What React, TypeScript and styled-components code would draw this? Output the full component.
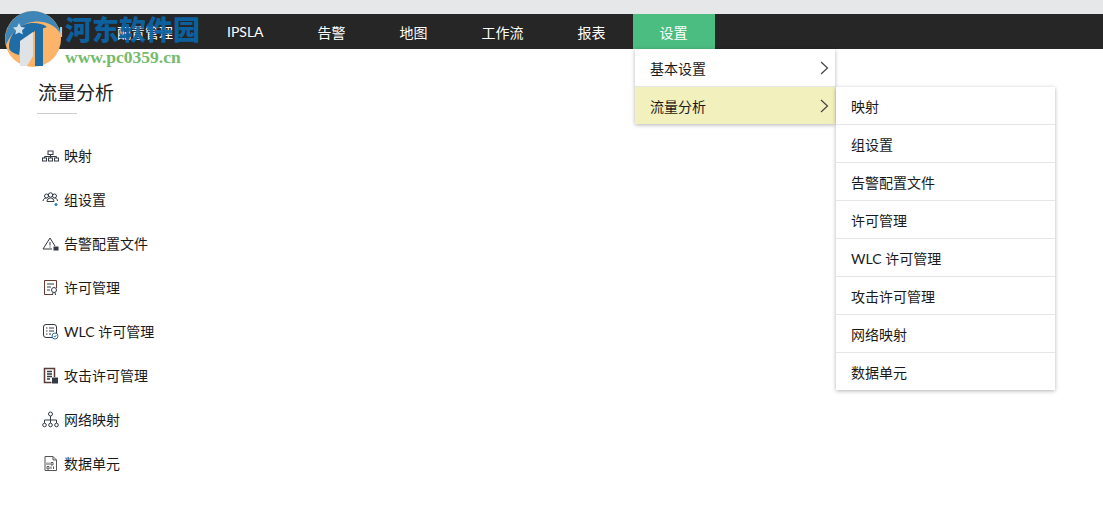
import React from 'react';
import styled, { createGlobalStyle } from 'styled-components';

const GlobalStyle = createGlobalStyle`
  html, body {
    margin: 0;
    padding: 0;
    background: #ffffff;
    font-family: Lato, "Noto Sans CJK SC", sans-serif;
    color: #1a1a1a;
    overflow: hidden;
  }
`;

const Page = styled.div`
  position: relative;
  width: 1103px;
  height: 526px;
`;

const TopStrip = styled.div`
  height: 14px;
  background: #e6e7e9;
`;

const NavBar = styled.nav`
  position: relative;
  display: flex;
  height: 35px;
  padding-left: 13px;
  background: #262626;
`;

const NavItem = styled.div<{ $active?: boolean }>`
  display: flex;
  align-items: center;
  padding: 0 27px;
  font-size: 14px;
  color: #ffffff;
  background: ${props => (props.$active ? '#4cbd80' : 'transparent')};
`;

const Content = styled.main`
  padding: 31px 0 0 38px;
`;

const Title = styled.h1`
  margin: 0;
  padding-bottom: 7px;
  font-size: 19px;
  line-height: 26px;
  font-weight: 400;
  color: #222222;
`;

const TitleRule = styled.div`
  width: 40px;
  height: 1px;
  margin-left: -1px;
  background: #cccccc;
`;

const FeatureList = styled.ul`
  list-style: none;
  margin: 19px 0 0;
  padding: 0 0 0 4px;
`;

const FeatureRow = styled.li`
  display: flex;
  align-items: center;
  gap: 5px;
  height: 44px;
  font-size: 14px;
  color: #1a1a1a;
`;

const IconBox = styled.svg`
  width: 17px;
  height: 17px;
  flex: none;
  fill: none;
  stroke: #333a44;
  stroke-width: 1;
`;

const Dropdown = styled.div`
  position: absolute;
  top: 49px;
  left: 635px;
  width: 200px;
  background: #ffffff;
  box-shadow: 0 1px 4px rgba(0, 0, 0, 0.3);
`;

const DropdownItem = styled.div<{ $active?: boolean }>`
  display: flex;
  align-items: center;
  justify-content: space-between;
  height: 37px;
  padding: 0 6px 0 15px;
  font-size: 14px;
  color: #1a1a1a;
  background: ${props => (props.$active ? '#f2f0bd' : '#ffffff')};
  & + & {
    border-top: 1px solid #e6e6e6;
  }
`;

const Chevron = styled.svg`
  width: 9px;
  height: 14px;
  fill: none;
  stroke: #444444;
  stroke-width: 1.2;
`;

const SubMenu = styled.div`
  position: absolute;
  top: 87px;
  left: 836px;
  width: 219px;
  background: #ffffff;
  box-shadow: 0 1px 4px rgba(0, 0, 0, 0.3);
`;

const SubMenuItem = styled.div`
  display: flex;
  align-items: center;
  height: 37px;
  padding-left: 15px;
  font-size: 14px;
  color: #1a1a1a;
  & + & {
    border-top: 1px solid #e6e6e6;
  }
`;

const Watermark = styled.div`
  position: absolute;
  top: 11px;
  left: 5px;
  display: flex;
  gap: 4px;
  pointer-events: none;
`;

const WatermarkText = styled.div`
  display: flex;
  flex-direction: column;
  align-items: flex-start;
`;

const WatermarkTitle = styled.div`
  height: 35px;
  font-family: "Noto Sans CJK SC", sans-serif;
  font-size: 27px;
  line-height: 36px;
  font-weight: 900;
  color: rgba(10, 100, 165, 0.95);
`;

const WatermarkUrl = styled.div`
  margin-top: 1px;
  font-family: "Liberation Serif", serif;
  font-size: 17.5px;
  line-height: 20px;
  font-weight: 700;
  color: #74bb6c;
`;

const features: { label: string; icon: React.ReactNode }[] = [
  {
    label: '映射',
    icon: (
      <>
        <rect x="6" y="4" width="5" height="3.5" />
        <rect x="0.5" y="11" width="4" height="3" />
        <rect x="6.5" y="11" width="4" height="3" />
        <rect x="12.5" y="11" width="4" height="3" />
        <path d="M2.5 11V9.5h12V11M8.5 7.5V11" />
      </>
    ),
  },
  {
    label: '组设置',
    icon: (
      <>
        <circle cx="4.5" cy="5" r="2" />
        <circle cx="8.5" cy="4" r="2.2" />
        <circle cx="12.5" cy="5" r="2" />
        <path d="M1 10c0-2 2-3 3.5-3M5 10.5c0-2 1.5-3.5 3.5-3.5s3.5 1.500 3.500 3.500H5zM12.500 7c1.500 0 3 1 3 3" />
        <circle cx="14" cy="13.500" r="1.500" fill="#2f7fc1" stroke="none" />
      </>
    ),
  },
  {
    label: '告警配置文件',
    icon: (
      <>
        <path d="M8 3 1 14h9M8 3l5 8" />
        <path d="M8 7v3.500M8 11.500v1" />
        <rect x="12" y="12" width="4" height="3" fill="#333a44" />
      </>
    ),
  },
  {
    label: '许可管理',
    icon: (
      <>
        <path d="M14.500 9V1.500h-12v14h8" stroke="#6b3a2e" />
        <path d="M5 5h7M5 8h4M5 11h3" />
        <circle cx="12" cy="11" r="2.500" />
        <path d="M11 13.500 10.500 16M13 13.500l.5 2.500" />
      </>
    ),
  },
  {
    label: 'WLC 许可管理',
    icon: (
      <>
        <rect x="1.500" y="1.500" width="13" height="13" rx="2.500" />
        <path d="M4 5h1.500M7 5h5M4 8h1.500M7 8h5M4 11h1.500M7 11h2" />
        <circle cx="13" cy="13" r="3" fill="#ffffff" stroke="#2f6fa8" />
        <path d="m11.800 13 1 1 1.500-1.800" stroke="#2f6fa8" />
      </>
    ),
  },
  {
    label: '攻击许可管理',
    icon: (
      <>
        <path d="M12.500 10V1.500h-10v14h7" strokeWidth="1.500" stroke="#5a3a34" />
        <path d="M5 4.500h5M5 7h5M5 9.500h5M5 12h3" strokeWidth="1.300" />
        <rect x="10.500" y="11" width="5" height="5" fill="#333a44" />
      </>
    ),
  },
  {
    label: '网络映射',
    icon: (
      <>
        <circle cx="8.500" cy="3" r="2" />
        <circle cx="2.500" cy="14" r="1.800" />
        <circle cx="8.500" cy="14" r="1.800" />
        <circle cx="14.500" cy="14" r="1.800" />
        <path d="M8.500 5v7M2.500 12V9h12v3" />
      </>
    ),
  },
  {
    label: '数据单元',
    icon: (
      <>
        <path d="M3 1.500h8l3.500 3.500v10.500H3z" stroke="#555555" />
        <path d="M11 1.500V5h3.500" stroke="#555555" />
        <path d="M5 7.500v2.500M7 7.500v2.500M9 7.500h2v2.500H9zM5 11.500h2V14H5zM9 11.500V14M11.500 11.500V14" stroke="#555555" />
      </>
    ),
  },
];

const navItems = ['DPI', '配置管理', 'IPSLA', '告警', '地图', '工作流', '报表', '设置'];

const WatermarkLogo: React.FC = () => (
  <svg width="56" height="56" viewBox="0 0 56 56" style={{ flex: 'none' }}>
    <circle cx="28" cy="28" r="28" fill="#fbb468" />
    <path d="M28 0a28 28 0 0 1 27 22c-6-10-20-14-32-10C12 16 4 26 1 34A28 28 0 0 1 28 0z" fill="#3f86b8" />
    <path d="M4 36c0-14 12-24 24-24 6 0 10 1 14 4L30 20 16 30 14 44C8 42 4 40 4 36z" fill="#1f6da6" />
    <path d="M15 30 28 21v24l-6 10H15z" fill="#dfe3e6" />
    <path d="M30 17h8v38h-8z" fill="#1f6da6" />
    <path d="m14 12 2 4 4 .5-3 3 .8 4-3.800-2-3.800 2 .8-4-3-3 4-.5z" fill="#cfe0ec" />
  </svg>
);

const App: React.FC = () => {
  return (
    <Page>
      <GlobalStyle />
      <TopStrip />
      <NavBar>
        {navItems.map(item => (
          <NavItem key={item} $active={item === '设置'}>
            {item}
          </NavItem>
        ))}
      </NavBar>

      <Content>
        <Title>流量分析</Title>
        <TitleRule />
        <FeatureList>
          {features.map(feature => (
            <FeatureRow key={feature.label}>
              <IconBox viewBox="0 0 17 17">{feature.icon}</IconBox>
              {feature.label}
            </FeatureRow>
          ))}
        </FeatureList>
      </Content>

      <Dropdown>
        <DropdownItem>
          基本设置
          <Chevron viewBox="0 0 9 14">
            <path d="m1 1 6.500 6L1 13" />
          </Chevron>
        </DropdownItem>
        <DropdownItem $active>
          流量分析
          <Chevron viewBox="0 0 9 14">
            <path d="m1 1 6.500 6L1 13" />
          </Chevron>
        </DropdownItem>
      </Dropdown>

      <SubMenu>
        {features.map(feature => (
          <SubMenuItem key={feature.label}>{feature.label}</SubMenuItem>
        ))}
      </SubMenu>

      <Watermark>
        <WatermarkLogo />
        <WatermarkText>
          <WatermarkTitle>河东软件园</WatermarkTitle>
          <WatermarkUrl>www.pc0359.cn</WatermarkUrl>
        </WatermarkText>
      </Watermark>
    </Page>
  );
};

export default App;
